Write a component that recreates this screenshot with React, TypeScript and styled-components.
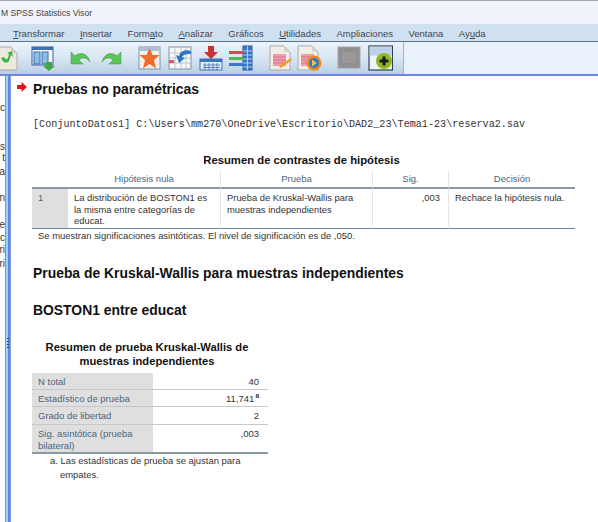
import React from "react";
import styled, { createGlobalStyle } from "styled-components";

const Global = createGlobalStyle`
  html, body { margin: 0; padding: 0; background: #fff; }
  body { width: 598px; height: 522px; overflow: hidden; font-family: "Liberation Sans", Arial, sans-serif; }
`;

const Shell = styled.div`
  width: 598px; height: 522px; display: flex; flex-direction: column; overflow: hidden; background: #fff;
`;
const TitleBar = styled.div`
  height: 23px; flex: none; border-top: 1px solid #a8a8a8; background: #f0f4fa;
  font: 8.6px "Liberation Sans", sans-serif; color: #444; display: flex; align-items: center;
  white-space: nowrap; overflow: hidden;
`;
const TitleText = styled.span` margin-left: 1px; `;
const MenuBar = styled.div`
  height: 18px; flex: none; box-sizing: border-box; background: #cfe0f1; border-bottom: 1px solid #5f7484;
  display: flex; align-items: center; font: 9.5px "Liberation Sans", sans-serif; color: #3d4750;
  padding: 2px 0 0 13px; gap: 15.5px; white-space: nowrap;
`;
const Under = styled.span` text-decoration: underline; text-underline-offset: 1px; `;
const ToolRow = styled.div`
  height: 34px; flex: none; box-sizing: border-box; display: flex; background: #e9f2fb; border-bottom: 2px solid #6f86d9;
`;
const Tools = styled.div`
  width: 404px; flex: none; box-sizing: border-box; display: flex; align-items: center;
  background: linear-gradient(#ecf3fa, #d6e4f2 55%, #b9cfe5); border-right: 1px solid #9fb3c6;
`;
const Slot = styled.svg<{ $w: number; $gap: number }>`
  width: ${(p) => p.$w}px; height: 26px; margin-left: ${(p) => p.$gap}px; flex: none; display: block;
`;
const Body = styled.div` flex: 1; display: flex; min-height: 0; `;
const Side = styled.div`
  width: 5px; flex: none; overflow: hidden; background: #fff; font: 10px "Liberation Sans", sans-serif; color: #333;
  display: flex; flex-direction: column; align-items: flex-end; padding-top: 26px; box-sizing: border-box;
`;
const SideLine = styled.div<{ $h: number }>` height: ${(p) => p.$h}px; line-height: 12px; flex: none; `;
const Sash = styled.div`
  width: 6px; flex: none; position: relative;
  background: linear-gradient(90deg, #7f9db8 0 1px, #9fd2f6 1px 3px, #5c86dc 3px 5px, #8c9cf0 5px 6px);
`;
const Grip = styled.div`
  position: absolute; left: 2px; top: 262px; width: 2px; height: 11px;
  background: repeating-linear-gradient(#24406f 0 1px, transparent 1px 3px);
`;
const Main = styled.div`
  flex: 1; min-width: 0; padding: 2px 0 0 6px; color: #000;
`;
const HeadRow = styled.div` display: flex; align-items: center; gap: 6px; height: 21px; `;
const Arrow = styled.svg` width: 10px; height: 10px; flex: none; margin-top: -3px; `;
const H1 = styled.h1<{ $top?: number; $left?: number }>`
  margin: ${(p) => p.$top ?? 0}px 0 0 ${(p) => p.$left ?? 0}px;
  font: bold 13.9px/16px "Liberation Sans", sans-serif; color: #111; white-space: nowrap;
`;
const Syntax = styled.div`
  margin: 19px 0 0 16px; font: 10.13px/14px "Liberation Mono", monospace; color: #333; white-space: nowrap;
`;
const TableTitle = styled.div`
  margin: 22px 0 0 13px; width: 543px; text-align: center; font: bold 11.3px/13px "Liberation Sans", sans-serif; color: #111;
`;
const Hyp = styled.div`
  margin: 4px 0 0 15px; width: 543px; display: grid; grid-template-columns: 36px 152px 152px 76px 127px;
  font: 9.4px/11.5px "Liberation Sans", sans-serif; color: #333;
`;
const HCell = styled.div<{ $rule?: boolean }>`
  height: 15px; padding-top: 1px; text-align: center; color: #4a6580; border-bottom: 2px solid #8a9aa3;
  border-left: ${(p) => (p.$rule ? "1px solid #e3e7ea" : "none")}; line-height: 13px; font-size: 9.5px;
`;
const Cell = styled.div<{ $rule?: boolean; $grey?: boolean; $right?: boolean }>`
  height: 36px; padding: 3px ${(p) => (p.$right ? 8 : 5)}px 0 6px; border-bottom: 1px solid #6e8291;
  border-left: ${(p) => (p.$rule ? "1px solid #e3e7ea" : "none")};
  background: ${(p) => (p.$grey ? "#dfdfdf" : "transparent")};
  color: ${(p) => (p.$grey ? "#4a6580" : "#333")};
  text-align: ${(p) => (p.$right ? "right" : "left")};
`;
const Foot = styled.div`
  margin: 1px 0 0 21px; font: 9.45px/12px "Liberation Sans", sans-serif; color: #333; white-space: nowrap;
`;
const SmallTitle = styled.div`
  margin: 22px 0 0 12px; width: 236px; text-align: center; font: bold 11.2px/14px "Liberation Sans", sans-serif; color: #111;
`;
const Kw = styled.div`
  margin: 5px 0 0 15px; width: 236px; display: grid; grid-template-columns: 121px 115px;
  font: 9.5px/12px "Liberation Sans", sans-serif; color: #333; border-bottom: 2px solid #8a9aa3;
`;
const KwLabel = styled.div<{ $h: number; $last?: boolean }>`
  height: ${(p) => p.$h}px; background: #dfdfdf; color: #4a6580; padding: 3px 0 0 6px; box-sizing: border-box;
  border-bottom: ${(p) => (p.$last ? "none" : "1px solid #c6c9cb")};
`;
const KwVal = styled.div<{ $h: number; $last?: boolean }>`
  height: ${(p) => p.$h}px; text-align: right; padding: 3px 9px 0 0; box-sizing: border-box;
  border-bottom: ${(p) => (p.$last ? "none" : "1px solid #c6c9cb")};
`;
const Sup = styled.sup` font-size: 6.5px; line-height: 0; font-weight: bold; vertical-align: 4px; margin-left: 1px; `;
const Note = styled.div`
  margin: 0 0 0 33px; width: 205px; padding-left: 10px; text-indent: -10px;
  font: 9.45px/13.5px "Liberation Sans", sans-serif; color: #333;
`;

const Doc = () => (
  <>
    <path d="M1 1h14l6 6v18H1z" fill="#f1eee7" stroke="#a9a9a9" />
    <path d="M15 1l6 6h-6z" fill="#d9d5ca" />
    <rect x="4" y="9" width="13" height="12" fill="#ec9fae" />
    <path d="M4 12h13M4 15h13M4 18h13" stroke="#d9606f" strokeWidth=".7" />
  </>
);

export default function App() {
  return (
    <Shell>
      <Global />
      <TitleBar><TitleText>M SPSS Statistics Visor</TitleText></TitleBar>
      <MenuBar>
        <span><Under>T</Under>ransformar</span>
        <span><Under>I</Under>nsertar</span>
        <span>Form<Under>a</Under>to</span>
        <span><Under>A</Under>nalizar</span>
        <span>Gráficos</span>
        <span><Under>U</Under>tilidades</span>
        <span>Ampliaciones</span>
        <span>Ventana</span>
        <span>Ay<Under>u</Under>da</span>
      </MenuBar>
      <ToolRow>
        <Tools>
          <Slot $w={18} $gap={0} viewBox="0 0 18 26">
            <path d="M-4 2h15l6 6v17H-4z" fill="#eee9dc" stroke="#aaa" />
            <path d="M11 2l6 6h-6z" fill="#d8d3c6" />
            <path d="M1 13c2 5 6 6 8 3l2-6 2 2-1-6-5 2 2 1-1 4c-1 2-3 1-4-1z" fill="#3fb64a" />
          </Slot>
          <Slot $w={24} $gap={13} viewBox="0 0 24 26">
            <rect x="1" y="2" width="21" height="18" fill="#f4f7fb" stroke="#3c5f99" />
            <rect x="1" y="2" width="21" height="3" fill="#3c6fb5" />
            <rect x="3" y="7" width="6" height="12" fill="#8fbbe8" stroke="#3c6fb5" />
            <rect x="11" y="7" width="6" height="12" fill="#8fbbe8" stroke="#3c6fb5" />
            <path d="M15 17h6v4h3l-6 5-6-5h3z" fill="#3fa842" />
          </Slot>
          <Slot $w={21} $gap={15} viewBox="0 0 21 26">
            <path d="M1 7v12h12l-4-4c3-3 7-3 11 2-2-8-9-11-15-6L1 7z" fill="#5cc45a" stroke="#3c963c" strokeWidth=".5" />
          </Slot>
          <Slot $w={21} $gap={10} viewBox="0 0 21 26">
            <path d="M20 7v12H8l4-4c-3-3-7-3-11 2 2-8 9-11 15-6l4-4z" fill="#5cc45a" stroke="#3c963c" strokeWidth=".5" />
          </Slot>
          <Slot $w={23} $gap={16} viewBox="0 0 23 26">
            <rect x="1" y="2" width="21" height="22" fill="#f4f1ea" stroke="#7f95a8" />
            <rect x="1" y="2" width="21" height="4" fill="#aebfd2" />
            <path d="M11.500 3l3 7h7l-5.500 5 2 8.500-6.500-4.500L5 23.500l2-8.500L1.500 10h7z" fill="#f26b2c" />
          </Slot>
          <Slot $w={24} $gap={7} viewBox="0 0 24 26">
            <rect x="1" y="2" width="22" height="22" fill="#f7f7f4" stroke="#7f95a8" />
            <path d="M1 8h22M1 13h22M1 18h22M7 2v22M13 2v22M18 2v22" stroke="#a9bccd" strokeWidth=".8" />
            <path d="M23 6c-7-2-11 1-12 5l-3-1 3 8 6-5-3-1c2-3 5-3 9-3z" fill="#2f74c8" />
            <rect x="1" y="15" width="5" height="3" fill="#e8505b" />
          </Slot>
          <Slot $w={24} $gap={7} viewBox="0 0 24 26">
            <rect x="1" y="14" width="22" height="11" fill="#e5edf6" stroke="#3c6fb5" />
            <rect x="1" y="14" width="22" height="3" fill="#3c74bd" />
            <path d="M4 20h17M4 22.500h17M6 18v7M10 18v7M14 18v7M18 18v7" stroke="#3c6fb5" strokeWidth=".8" />
            <path d="M9 1h6v6h4l-7 7-7-7h4z" fill="#c9332d" />
          </Slot>
          <Slot $w={25} $gap={5} viewBox="0 0 25 26">
            <rect x="15" y="1" width="9" height="24" fill="#3d79c2" stroke="#2b5b96" />
            <path d="M15 6h9M15 10h9M15 14h9M15 18h9M15 22h9M19.500 1v24" stroke="#cfe2f6" strokeWidth=".8" />
            <rect x="1" y="6" width="14" height="3" fill="#e0454f" />
            <rect x="1" y="12" width="14" height="3" fill="#54b854" />
            <rect x="1" y="18" width="14" height="3" fill="#3d79c2" />
          </Slot>
          <Slot $w={24} $gap={16} viewBox="0 0 24 26">
            <Doc />
            <path d="M10 21l12-8 1 2-11 8z" fill="#f0a020" />
          </Slot>
          <Slot $w={26} $gap={4} viewBox="0 0 26 26">
            <Doc />
            <circle cx="17" cy="18" r="7.500" fill="#ef8a1e" />
            <circle cx="17" cy="18" r="5" fill="#2f7bc8" />
            <path d="M15 14.500l5 3.500-5 3.500z" fill="#f4c04a" />
          </Slot>
          <Slot $w={24} $gap={14} viewBox="0 0 24 26">
            <rect x="1" y="2" width="22" height="21" fill="#8f8f8f" stroke="#a5a5a5" />
            <rect x="5" y="7" width="14" height="11" fill="#999" />
          </Slot>
          <Slot $w={25} $gap={7} viewBox="0 0 25 26">
            <rect x="1" y="1" width="23.500" height="24" fill="#edf4fc" stroke="#33404c" strokeWidth="1.200" />
            <rect x="1.600" y="1.600" width="22.300" height="9" fill="#bcd2e8" />
            <circle cx="16" cy="16" r="8" fill="#92b820" />
            <path d="M14.500 11.500h3v3h3v3h-3v3h-3v-3h-3v-3h3z" fill="#1b1b1b" />
          </Slot>
        </Tools>
      </ToolRow>
      <Body>
        <Side>
          <SideLine $h={39}>ic</SideLine>
          <SideLine $h={11}>s</SideLine>
          <SideLine $h={14}>t</SideLine>
          <SideLine $h={26}>a</SideLine>
          <SideLine $h={27}>n</SideLine>
          <SideLine $h={13}>e</SideLine>
          <SideLine $h={12}>c</SideLine>
          <SideLine $h={14}>ri</SideLine>
          <SideLine $h={12}>ri</SideLine>
        </Side>
        <Sash><Grip /></Sash>
        <Main>
          <HeadRow>
            <Arrow viewBox="0 0 10 10"><path d="M0 3h4.500V0L10 5l-5.500 5V7H0z" fill="#e8121c" /></Arrow>
            <H1>Pruebas no paramétricas</H1>
          </HeadRow>
          <Syntax>[ConjuntoDatos1] C:\Users\mm270\OneDrive\Escritorio\DAD2_23\Tema1-23\reserva2.sav</Syntax>
          <TableTitle>Resumen de contrastes de hipótesis</TableTitle>
          <Hyp>
            <HCell />
            <HCell>Hipótesis nula</HCell>
            <HCell $rule>Prueba</HCell>
            <HCell $rule>Sig.</HCell>
            <HCell $rule>Decisión</HCell>
            <Cell $grey>1</Cell>
            <Cell>La distribución de BOSTON1 es la misma entre categorías de educat.</Cell>
            <Cell $rule>Prueba de Kruskal-Wallis para muestras independientes</Cell>
            <Cell $rule $right>,003</Cell>
            <Cell $rule>Rechace la hipótesis nula.</Cell>
          </Hyp>
          <Foot>Se muestran significaciones asintóticas. El nivel de significación es de ,050.</Foot>
          <H1 $top={23} $left={16}>Prueba de Kruskal-Wallis para muestras independientes</H1>
          <H1 $top={21} $left={16}>BOSTON1 entre educat</H1>
          <SmallTitle>Resumen de prueba Kruskal-Wallis de<br />muestras independientes</SmallTitle>
          <Kw>
            <KwLabel $h={17}>N total</KwLabel><KwVal $h={17}>40</KwVal>
            <KwLabel $h={17}>Estadístico de prueba</KwLabel><KwVal $h={17}>11,741<Sup>a</Sup></KwVal>
            <KwLabel $h={18}>Grado de libertad</KwLabel><KwVal $h={18}>2</KwVal>
            <KwLabel $h={27} $last>Sig. asintótica (prueba bilateral)</KwLabel><KwVal $h={27} $last>,003</KwVal>
          </Kw>
          <Note>a. Las estadísticas de prueba se ajustan para empates.</Note>
        </Main>
      </Body>
    </Shell>
  );
}
